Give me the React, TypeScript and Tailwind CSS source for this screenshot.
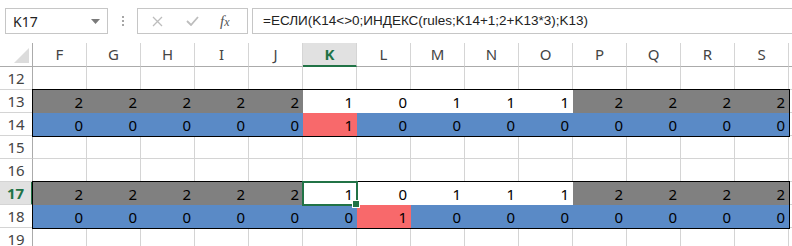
import React from "react";

const COLS = ["F", "G", "H", "I", "J", "K", "L", "M", "N", "O", "P", "Q", "R", "S", ""];

type Kind = "g" | "w" | "b" | "r" | "e";
type C = { v?: number; k: Kind };

const topRow: C[] = [2, 2, 2, 2, 2, 1, 0, 1, 1, 1, 2, 2, 2, 2].map((v) => ({
  v,
  k: v === 2 ? "g" : "w",
}));
const row14: C[] = [0, 0, 0, 0, 0, 1, 0, 0, 0, 0, 0, 0, 0, 0].map((v) => ({
  v,
  k: v === 1 ? "r" : "b",
}));
const row18: C[] = [0, 0, 0, 0, 0, 0, 1, 0, 0, 0, 0, 0, 0, 0].map((v) => ({
  v,
  k: v === 1 ? "r" : "b",
}));
const empty: C[] = COLS.slice(0, 14).map(() => ({ k: "e" }));

const kindCls: Record<Kind, string> = {
  g: "bg-[#808080] border-[#808080]",
  w: "bg-white border-white",
  b: "bg-[#5a8ac6] border-[#5a8ac6]",
  r: "bg-[#f8696b] border-[#f8696b]",
  e: "bg-white border-[#d4d4d4]",
};

function Cell({ c, sel }: { c: C; sel?: boolean }) {
  return (
    <div
      className={`relative w-[54px] shrink-0 h-full border-r border-b box-border flex items-end justify-end pr-[3px] pb-[1px] text-[15px] leading-[18px] text-black ${kindCls[c.k]} ${
        sel ? "z-10 outline-2 outline-[#217346] -outline-offset-1 border-white" : ""
      }`}
    >
      {c.v !== undefined ? c.v : ""}
      {sel && (
        <div className="absolute right-[-4px] bottom-[-4px] w-[6px] h-[6px] bg-[#217346] border border-white box-content" />
      )}
    </div>
  );
}

function RowHead({ n, sel }: { n: number; sel?: boolean }) {
  return (
    <div
      className={`w-[33px] shrink-0 h-full box-border border-b border-[#d4d4d4] flex items-center justify-center text-[15px] ${
        sel
          ? "bg-[#e1e1e1] border-r-2 border-r-[#217346] text-[#217346] font-bold"
          : "bg-white border-r border-r-[#ababab] text-[#444]"
      }`}
    >
      {n}
    </div>
  );
}

function Row({ n, cells }: { n: number; cells: C[] }) {
  return (
    <div className="flex h-[23px]">
      <RowHead n={n} />
      {cells.map((c, i) => (
        <Cell key={i} c={c} />
      ))}
      <Cell c={{ k: "e" }} />
    </div>
  );
}

function Block({ a, b, n, selHead, selIdx }: { a: C[]; b: C[]; n: number; selHead?: boolean; selIdx?: number }) {
  return (
    <div className="flex">
      <div className="flex flex-col">
        <div className="h-[23px] flex">
          <RowHead n={n} sel={selHead} />
        </div>
        <div className="h-[23px] flex">
          <RowHead n={n + 1} />
        </div>
      </div>
      <div className="flex flex-col outline-2 outline-black -outline-offset-1 relative z-[5]">
        <div className="flex h-[23px]">
          {a.map((c, i) => (
            <Cell key={i} c={c} sel={selIdx === i} />
          ))}
        </div>
        <div className="flex h-[23px]">
          {b.map((c, i) => (
            <Cell key={i} c={c} />
          ))}
        </div>
      </div>
      <div className="flex flex-col">
        <div className="h-[23px] flex">
          <Cell c={{ k: "e" }} />
        </div>
        <div className="h-[23px] flex">
          <Cell c={{ k: "e" }} />
        </div>
      </div>
    </div>
  );
}

export default function App() {
  return (
    <div
      className="w-[792px] h-[246px] overflow-hidden bg-white text-[#222]"
      style={{ fontFamily: '"Noto Sans", "Open Sans", sans-serif' }}
    >
      {/* formula bar */}
      <div className="flex items-start h-[43px] pt-[8px]">
        <div className="ml-[5px] w-[103px] h-[26px] border border-[#c6c6c6] box-border flex items-center justify-between pl-[7px] pr-[7px] text-[14px] text-[#222]">
          <span>K17</span>
          <svg width="9" height="5" viewBox="0 0 9 5">
            <path d="M0 0 L9 0 L4.5 5 Z" fill="#7a7a7a" />
          </svg>
        </div>
        <div className="w-[29px] h-[26px] flex flex-col items-center justify-center gap-[2px]">
          <div className="w-[2px] h-[2px] bg-[#a6a6a6]" />
          <div className="w-[2px] h-[2px] bg-[#a6a6a6]" />
          <div className="w-[2px] h-[2px] bg-[#a6a6a6]" />
        </div>
        <div className="w-[111px] h-[26px] border border-[#c6c6c6] box-border flex items-center">
          <svg className="ml-[14px]" width="11" height="11" viewBox="0 0 11 11">
            <path d="M1 1 L10 10 M10 1 L1 10" stroke="#bdbdbd" strokeWidth="1.3" />
          </svg>
          <svg className="ml-[23px]" width="13" height="10" viewBox="0 0 13 10">
            <path d="M1 5 L5 9 L12 1" stroke="#bdbdbd" strokeWidth="1.8" fill="none" />
          </svg>
          <span
            className="ml-[21px] text-[15px] italic text-[#555] leading-none"
            style={{ fontFamily: '"Liberation Serif", serif' }}
          >
            f<span className="text-[12px]">x</span>
          </span>
        </div>
        <div
          className="ml-[4px] flex-1 h-[26px] border border-r-0 border-[#c6c6c6] box-border flex items-center pl-[10px] text-[13.5px] text-[#222] whitespace-nowrap"
          style={{ fontFamily: '"Liberation Sans", Arial, sans-serif' }}
        >
          =ЕСЛИ(K14&lt;&gt;0;ИНДЕКС(rules;K14+1;2+K13*3);K13)
        </div>
      </div>

      {/* column header */}
      <div className="flex h-[24px]">
        <div className="w-[33px] shrink-0 h-full box-border border-r border-b border-[#ababab] relative">
          <svg className="absolute right-[3px] bottom-[3px]" width="15" height="15" viewBox="0 0 15 15">
            <path d="M15 0 L15 15 L0 15 Z" fill="#dcdcdc" />
          </svg>
        </div>
        {COLS.map((c, i) => (
          <div
            key={i}
            className={`w-[54px] shrink-0 h-full box-border border-r border-r-[#d5d5d5] flex items-center justify-center text-[15px] ${
              c === "K"
                ? "bg-[#e1e1e1] border-b-2 border-b-[#217346] text-[#217346] font-bold"
                : "border-b border-b-[#ababab] text-[#444]"
            }`}
          >
            {c}
          </div>
        ))}
      </div>

      <Row n={12} cells={empty} />
      <Block n={13} a={topRow} b={row14} />
      <Row n={15} cells={empty} />
      <Row n={16} cells={empty} />
      <Block n={17} a={topRow} b={row18} selHead selIdx={5} />
      <Row n={19} cells={empty} />
    </div>
  );
}
